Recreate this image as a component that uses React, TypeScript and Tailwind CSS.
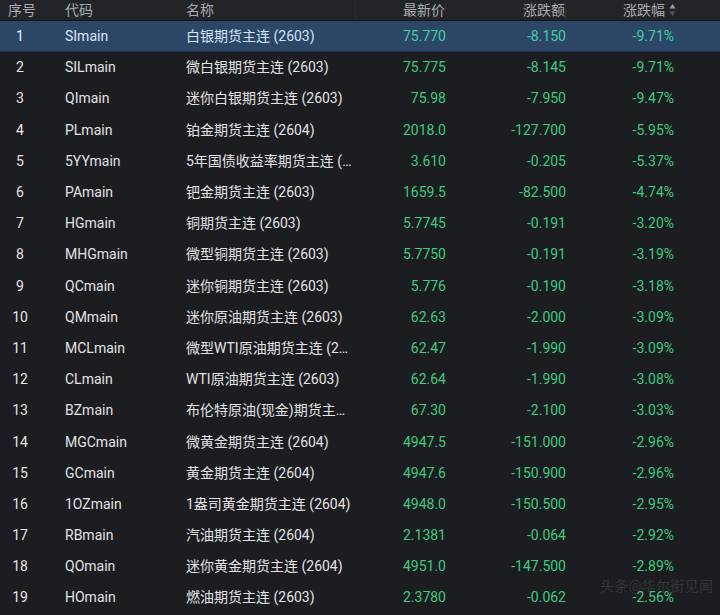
const rows: [string, string, string, string, string][] = [
  ["SImain", "白银期货主连 (2603)", "75.770", "-8.150", "-9.71%"],
  ["SILmain", "微白银期货主连 (2603)", "75.775", "-8.145", "-9.71%"],
  ["QImain", "迷你白银期货主连 (2603)", "75.98", "-7.950", "-9.47%"],
  ["PLmain", "铂金期货主连 (2604)", "2018.0", "-127.700", "-5.95%"],
  ["5YYmain", "5年国债收益率期货主连 (2603)", "3.610", "-0.205", "-5.37%"],
  ["PAmain", "钯金期货主连 (2603)", "1659.5", "-82.500", "-4.74%"],
  ["HGmain", "铜期货主连 (2603)", "5.7745", "-0.191", "-3.20%"],
  ["MHGmain", "微型铜期货主连 (2603)", "5.7750", "-0.191", "-3.19%"],
  ["QCmain", "迷你铜期货主连 (2603)", "5.776", "-0.190", "-3.18%"],
  ["QMmain", "迷你原油期货主连 (2603)", "62.63", "-2.000", "-3.09%"],
  ["MCLmain", "微型WTI原油期货主连 (2603)", "62.47", "-1.990", "-3.09%"],
  ["CLmain", "WTI原油期货主连 (2603)", "62.64", "-1.990", "-3.08%"],
  ["BZmain", "布伦特原油(现金)期货主连 (2603)", "67.30", "-2.100", "-3.03%"],
  ["MGCmain", "微黄金期货主连 (2604)", "4947.5", "-151.000", "-2.96%"],
  ["GCmain", "黄金期货主连 (2604)", "4947.6", "-150.900", "-2.96%"],
  ["1OZmain", "1盎司黄金期货主连 (2604)", "4948.0", "-150.500", "-2.95%"],
  ["RBmain", "汽油期货主连 (2604)", "2.1381", "-0.064", "-2.92%"],
  ["QOmain", "迷你黄金期货主连 (2604)", "4951.0", "-147.500", "-2.89%"],
  ["HOmain", "燃油期货主连 (2603)", "2.3780", "-0.062", "-2.56%"],
];

const font = { fontFamily: 'Roboto, "Noto Sans CJK SC", sans-serif' };

const SortIcon = () => (
  <svg width="7" height="14" viewBox="0 0 7 14" className="ml-1">
    <path d="M3.5 1 L6.5 5.5 L0.5 5.5 Z" fill="#9a9ca2" />
    <path d="M3.5 13 L6.5 8.5 L0.5 8.5 Z" fill="#55575c" />
  </svg>
);

export default function App() {
  return (
    <div
      className="relative w-[720px] h-[615px] overflow-hidden bg-[#1c1d21] text-[14px]"
      style={font}
    >
      <div className="flex h-[21px] items-center bg-[#232428] text-[#a9abb0] border-b border-[#141518]">
        <div className="w-[65px] pl-2">序号</div>
        <div className="w-[121px]">代码</div>
        <div className="w-[170px] h-full flex items-center border-r border-[#2a2b2f]">名称</div>
        <div className="w-[90px] h-full flex items-center justify-end border-r border-[#2a2b2f]">最新价</div>
        <div className="w-[120px] h-full flex items-center justify-end border-r border-[#2e2f33]">涨跌额</div>
        <div className="w-[110px] h-full flex items-center justify-end">
          涨跌幅
          <SortIcon />
        </div>
      </div>
      {rows.map(([code, name, price, chg, pct], i) => {
        const sel = i === 0;
        return (
          <div
            key={code}
            className={
              sel
                ? "flex h-[31.2px] items-center bg-[#2c4668] border-b border-[#22344d]"
                : "flex h-[31.2px] items-center"
            }
          >
            <div className={sel ? "w-[40px] text-center text-[#eef2f8]" : "w-[40px] text-center text-[#e4e4e6]"}>
              {i + 1}
            </div>
            <div className="w-[25px]" />
            <div className={sel ? "w-[121px] text-[#dce6f2]" : "w-[121px] text-[#e2e2e4]"}>{code}</div>
            <div
              className={
                sel
                  ? "w-[167px] truncate text-[#d3e2f4]"
                  : "w-[167px] truncate text-[#e2e2e4]"
              }
            >
              {name}
            </div>
            <div className={sel ? "w-[93px] text-right text-[#43cfa2]" : "w-[93px] text-right text-[#3ccb7f]"}>
              {price}
            </div>
            <div className={sel ? "w-[120px] text-right text-[#43cfa2]" : "w-[120px] text-right text-[#3ccb7f]"}>
              {chg}
            </div>
            <div className={sel ? "w-[108px] text-right text-[#43cfa2]" : "w-[108px] text-right text-[#3ccb7f]"}>
              {pct}
            </div>
          </div>
        );
      })}
      <div className="absolute left-[600px] top-[576px] text-[14px] text-[#343539] tracking-wide">
        头条@华尔街见闻
      </div>
    </div>
  );
}
